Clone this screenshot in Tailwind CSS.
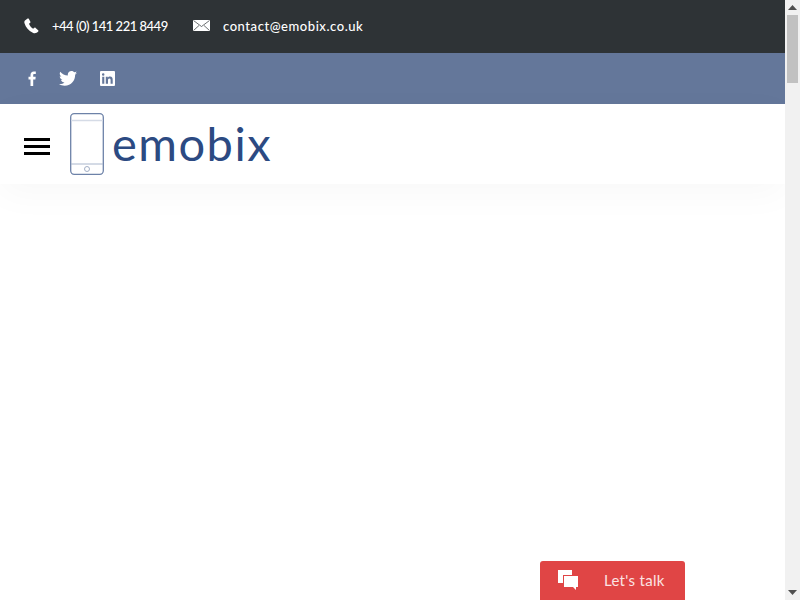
<!DOCTYPE html>
<html lang="en">
<head>
<meta charset="utf-8">
<title>emobix</title>
<script src="https://cdn.jsdelivr.net/npm/@tailwindcss/browser@4"></script>
</head>
<body class="m-0 overflow-hidden bg-white font-['Lato','Liberation_Sans',sans-serif]">
<div class="relative flex h-[600px] w-[800px] overflow-hidden">
  <main class="w-[785px] shrink-0">
    <div class="flex h-[53px] items-center bg-[#2e3336] pl-6 text-[13px] font-medium text-white">
      <svg class="h-[16px] w-[16px] -translate-y-px" viewBox="0 0 16 16" fill="#fff"><path d="M1 2.500 3.600.6c.4-.3.9-.2 1.200.2l1.600 2.900c.2.400.1.800-.2 1.100L5 5.800c.5 1.700 2.200 4 4.100 5l1.300-1c.4-.3.900-.2 1.200.1l2.600 2.400c.4.400.4.900 0 1.300-1.500 1.600-3.500 2.100-5.400 1.100C4.500 12.700 1.800 9.300.5 5.300.200 4.300.3 3.200 1 2.500Z"/></svg>
      <span class="ml-3 w-[116px] whitespace-nowrap tracking-[-0.5px]">+44 (0) 141 221 8449</span>
      <svg class="ml-[25px] h-[11px] w-[17px] -translate-y-px" viewBox="0 0 17 11"><rect width="17" height="11" fill="#fff"/><path d="M.5.500 8.500 6.500 16.500.500M.5 10.500 6 5.500M16.500 10.500 11 5.500" fill="none" stroke="#2e3336" stroke-width=".7"/></svg>
      <span class="ml-[13px] whitespace-nowrap tracking-[0.55px]">contact@emobix.co.uk</span>
    </div>
    <div class="flex h-[51px] items-center bg-[#64779a] pl-[28px]">
      <svg class="h-[15px] w-[9px]" viewBox="0 0 9 15" fill="#fff"><path d="M2.500 15V8.400H.5V5.800h2V4C2.500 1.700 3.800.500 5.800.500c.9 0 1.700.1 2 .1v2.300H6.500c-1.100 0-1.300.5-1.300 1.300v1.600h2.500l-.3 2.600H5.200V15Z"/></svg>
      <svg class="ml-[22px] h-[15px] w-[18px]" viewBox="0 0 24 20" fill="#fff"><path d="M24 2.400c-.9.400-1.800.7-2.800.8 1-.6 1.800-1.600 2.200-2.700-1 .6-2 1-3.100 1.200C19.300.7 18 0 16.600 0c-2.700 0-4.900 2.200-4.900 4.900 0 .4 0 .8.100 1.100C7.700 5.800 4.100 3.900 1.700.9 1.200 1.600 1 2.500 1 3.400c0 1.700.9 3.200 2.200 4.100-.8 0-1.600-.2-2.200-.6v.1c0 2.400 1.700 4.400 3.900 4.800-.4.100-.8.200-1.300.2-.3 0-.6 0-.9-.1.600 2 2.400 3.400 4.600 3.400-1.700 1.300-3.800 2.100-6.100 2.100-.4 0-.8 0-1.200-.1C2.200 18.700 4.800 19.500 7.500 19.500c9.100 0 14-7.500 14-14v-.6c1-.7 1.800-1.500 2.500-2.500Z"/></svg>
      <svg class="ml-[23px] h-[15px] w-[15px]" viewBox="0 0 15 15"><rect width="15" height="15" rx="1" fill="#fff"/><path d="M2.200 5.800h2.100v6.900H2.200ZM3.200 2.300a1.200 1.200 0 1 1 0 2.500 1.200 1.200 0 0 1 0-2.500ZM5.800 5.800h2v.9c.4-.6 1.100-1.100 2.200-1.100 2.200 0 2.700 1.400 2.700 3.300v3.800h-2.100V9.300c0-.9-.1-1.900-1.200-1.900s-1.400.9-1.400 1.800v3.500H5.800Z" fill="#64779a"/></svg>
    </div>
    <header class="relative flex h-[80px] items-center bg-white pl-6 shadow-[0_10px_36px_rgba(0,0,0,0.03)]">
      <div class="mt-[5px] flex h-[17px] w-[26px] flex-col justify-between">
        <span class="h-[3px] bg-black"></span><span class="h-[3px] bg-black"></span><span class="h-[3px] bg-black"></span>
      </div>
      <svg class="ml-[20px] h-[62px] w-[34px]" viewBox="0 0 34 62" fill="none" stroke="#6d82a8"><rect x=".7" y=".7" width="32.600" height="60.600" rx="3.500" stroke-width="1.300"/><path d="M1 7.500h32" stroke="#d5dbe6" stroke-width="1.500"/><path d="M1 51h32" stroke="#a9b6cc"/><circle cx="17" cy="56" r="2.500" stroke="#8d9cb8" stroke-width=".8"/></svg>
      <span class="-mt-[2px] ml-[8px] text-[47px] leading-none tracking-[1.500px] text-[#2c4a82]">emobix</span>
    </header>
  </main>
  <aside class="relative w-[15px] shrink-0 bg-[#f1f1f1]">
    <svg class="absolute left-[3px] top-[5px] h-[5px] w-[9px]" viewBox="0 0 9 5" fill="#505050"><path d="M4.500 0 9 5H0Z"/></svg>
    <div class="absolute left-[2px] top-[15px] h-[68px] w-[11px] bg-[#c1c1c1]"></div>
    <svg class="absolute bottom-[5px] left-[3px] h-[5px] w-[9px]" viewBox="0 0 9 5" fill="#505050"><path d="M4.500 5 9 0H0Z"/></svg>
  </aside>
  <button class="absolute bottom-0 left-[540px] flex h-[39px] w-[145px] items-center rounded-t-[3px] bg-[#e04545] pl-[18px] text-[15px] font-normal tracking-[0.3px] text-[#fbe3e3]">
    <svg class="h-[21px] w-[21px]" viewBox="0 0 21 21" fill="#fff"><path d="M0 0h14v5H5v8H0Z"/><path d="M6 6h14v11h-2v3l-3-3H6Z"/></svg>
    <span class="ml-[25px]">Let's talk</span>
  </button>
</div>
</body>
</html>
